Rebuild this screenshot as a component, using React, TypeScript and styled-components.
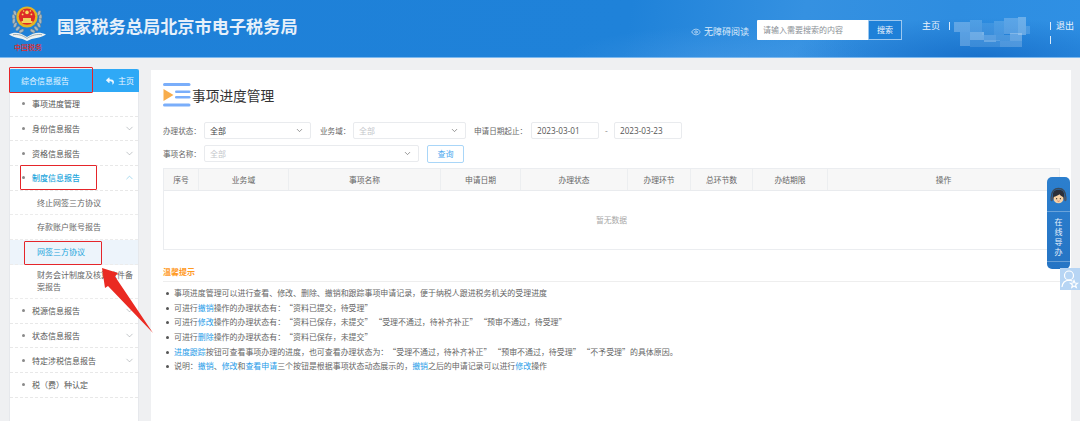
import React from "react";
import styled, { createGlobalStyle } from "styled-components";
import { ChevronDown, ChevronUp, Eye } from "lucide-react";
import { FaReply } from "react-icons/fa";

const Global = createGlobalStyle`
  html, body { margin: 0; padding: 0; background: #eff0f2; }
  body { font-family: "Noto Sans CJK SC", "Noto Sans", sans-serif; text-spacing-trim: space-all; }
  * { box-sizing: border-box; }
`;

const Page = styled.div`
  position: relative;
  width: 1080px;
  height: 421px;
  overflow: hidden;
  background: #eff0f2;
`;

const Header = styled.header`
  height: 58px;
  display: flex;
  align-items: flex-start;
  padding-left: 9px;
  color: #fff;
  border-bottom: 1px solid #7db9ef;
  background:
    radial-gradient(ellipse 190px 40px at 980px 58px, rgba(18, 104, 196, 0.75), transparent 100%),
    radial-gradient(ellipse 160px 36px at 720px 62px, rgba(90, 165, 235, 0.35), transparent 100%),
    linear-gradient(100deg, #1e80d8 0%, #1f82d9 58%, #3591e1 74%, #2e8de0 88%, #2f90e4 100%);
`;

const Logo = styled.svg`
  width: 38px;
  height: 50px;
  margin-top: 4px;
  flex: none;
`;

const SiteTitle = styled.h1`
  margin: 16px 0 0 10px;
  font-size: 17.2px;
  line-height: 20px;
  font-weight: 700;
  color: #e6f0fa;
  white-space: nowrap;
`;

const HeaderRight = styled.div`
  margin-left: auto;
  display: flex;
  align-items: flex-start;
`;

const A11y = styled.div`
  display: flex;
  align-items: center;
  gap: 3px;
  margin-top: 25px;
  font-size: 9px;
  line-height: 13px;
  color: #dcebfa;
  white-space: nowrap;
`;

const SearchBox = styled.div`
  display: flex;
  width: 145px;
  height: 20px;
  margin: 20px 0 0 8px;
  border-radius: 1px;
  background: #fff;
`;

const SearchInput = styled.div`
  flex: 1;
  padding-left: 6px;
  font-size: 8px;
  line-height: 20px;
  color: #8a8f96;
`;

const SearchButton = styled.div`
  width: 34px;
  text-align: center;
  font-size: 8px;
  line-height: 18px;
  color: #f0f6fd;
  background: #1e80d8;
  border: 1px solid #9cc8f0;
  border-radius: 0 1px 1px 0;
`;

const HeaderLink = styled.span`
  font-size: 9px;
  line-height: 14px;
  color: #eaf3fc;
  white-space: nowrap;
`;

const HomeLink = styled(HeaderLink)`
  margin: 19px 0 0 20px;
`;

const Pipe = styled.i`
  display: block;
  width: 1px;
  height: 8px;
  background: #dcebfa;
`;

const HomePipe = styled(Pipe)`
  margin: 22px 0 0 9px;
`;

const Mosaic = styled.svg`
  width: 84px;
  height: 36px;
  margin: 14px 0 0 4px;
  flex: none;
`;

const Logout = styled.div`
  display: grid;
  grid-template-columns: 1px auto;
  column-gap: 5px;
  row-gap: 3px;
  align-items: center;
  margin: 19px 6px 0 12px;
`;

const Content = styled.div`
  display: flex;
  align-items: flex-start;
  gap: 12px;
  padding: 11px 9px 0 9px;
`;

const Sidebar = styled.aside`
  width: 130px;
  height: 360px;
  flex: none;
  background: #fff;
  border-right: 1px solid #e6e8ec;
  border-left: 1px solid #e6e8ec;
`;

const SideHead = styled.div`
  height: 23px;
  margin: 0 -1px;
  display: flex;
  align-items: center;
  justify-content: space-between;
  padding: 0 5px 0 12px;
  background: #2fa9f6;
  color: #eaf6ff;
  font-size: 8px;
  border-radius: 2px 2px 0 0;
`;

const HomeBack = styled.span`
  display: flex;
  align-items: center;
  gap: 4px;
  font-size: 8px;
`;

const MenuRow = styled.div<{ $active?: boolean }>`
  height: 24.7px;
  display: flex;
  align-items: center;
  padding: 0 3px 0 12px;
  font-size: 8px;
  color: ${(p) => (p.$active ? "#1ba5dc" : "#555")};
  font-weight: ${(p) => (p.$active ? 500 : 400)};
  border-bottom: 1px dashed #e8e8e8;
  svg { margin-left: auto; color: ${(p) => (p.$active ? "#49b0dc" : "#7f858c")}; }
`;

const Dot = styled.i`
  width: 3px;
  height: 3px;
  margin-right: 7px;
  border-radius: 50%;
  background: #8a8a8a;
  flex: none;
`;

const SubRow = styled.div<{ $selected?: boolean; $tall?: boolean }>`
  min-height: 24.7px;
  display: flex;
  align-items: center;
  padding: 0 2px 0 27px;
  font-size: 8px;
  line-height: 12px;
  color: ${(p) => (p.$selected ? "#1ba5dc" : "#666")};
  background: ${(p) => (p.$selected ? "#edf4fb" : "#fff")};
  border-bottom: 1px dashed #ececec;
  ${(p) => p.$tall && "height: 34px;"}
`;

const Main = styled.main`
  width: 920px;
  height: 351px;
  margin-top: 1px;
  padding: 13px 11px 0 12px;
  background: #fff;
`;

const TitleRow = styled.div`
  display: flex;
  align-items: center;
  height: 24px;
`;

const TitleIcon = styled.svg`
  width: 29px;
  height: 24px;
  flex: none;
`;

const PageTitle = styled.h2`
  margin: 0;
  font-size: 13.7px;
  font-weight: 400;
  color: #333;
`;

const FormRow = styled.div`
  display: flex;
  align-items: center;
  height: 17px;
  margin-top: 6px;
`;

const FirstFormRow = styled(FormRow)`
  margin-top: 15px;
`;

const Label = styled.label<{ $w: number; $pad?: number }>`
  width: ${(p) => p.$w}px;
  padding-left: ${(p) => p.$pad ?? 0}px;
  flex: none;
  font-size: 7.6px;
  color: #666;
  white-space: nowrap;
`;

const Field = styled.div<{ $w: number; $muted?: boolean }>`
  width: ${(p) => p.$w}px;
  height: 17px;
  flex: none;
  display: flex;
  align-items: center;
  justify-content: space-between;
  padding: 0 6px 0 5px;
  font-size: 8px;
  color: ${(p) => (p.$muted ? "#c4c6ca" : "#444")};
  background: #fff;
  border: 1px solid #e9ebee;
  border-radius: 2px;
  svg { color: #777; }
`;

const DateField = styled(Field)`
  font-family: "Open Sans", "Noto Sans", sans-serif;
  font-size: 8.2px;
  color: #555;
`;

const Dash = styled.span`
  width: 15px;
  text-align: center;
  font-size: 8px;
  color: #777;
`;

const QueryButton = styled.button`
  width: 37px;
  height: 18px;
  margin-left: 8px;
  padding: 0;
  font: inherit;
  font-size: 8px;
  color: #4aa8ee;
  background: #fff;
  border: 1px solid #a9d6f8;
  border-radius: 2px;
`;

const Table = styled.div`
  margin-top: 6px;
  width: 897px;
  border: 1px solid #ebedf0;
`;

const TableHead = styled.div`
  display: grid;
  grid-template-columns: 35px 90px 152px 80px 107px 63px 62px 75px 1fr;
  height: 22px;
  background: #f7f7f7;
  border-bottom: 1px solid #e9ebee;
`;

const Th = styled.div`
  display: flex;
  align-items: center;
  justify-content: center;
  font-size: 7.8px;
  color: #666;
  border-right: 1px solid #eceef0;
  &:last-child { border-right: 0; }
`;

const Empty = styled.div`
  height: 58px;
  padding-bottom: 2px;
  display: flex;
  align-items: center;
  justify-content: center;
  font-size: 7.8px;
  color: #a8a8a8;
`;

const TipsTitle = styled.div`
  margin-top: 15px;
  height: 17px;
  font-size: 8px;
  line-height: 14px;
  font-weight: 700;
  color: #ff9a1f;
  border-bottom: 1px solid #eeeeee;
  width: 897px;
`;

const TipList = styled.ul`
  margin: 4px 0 0;
  padding: 0;
  list-style: none;
`;

const Tip = styled.li`
  position: relative;
  padding-left: 11px;
  height: 14.7px;
  font-size: 7.94px;
  line-height: 14.7px;
  color: #666;
  white-space: nowrap;
  &::before {
    content: "";
    position: absolute;
    left: 3px;
    top: 6px;
    width: 3px;
    height: 3px;
    border-radius: 50%;
    background: #555;
  }
`;

const Hl = styled.span`
  color: #1e9be8;
`;

const RedBox = styled.div<{ $x: number; $y: number; $w: number; $h: number }>`
  position: absolute;
  left: ${(p) => p.$x}px;
  top: ${(p) => p.$y}px;
  width: ${(p) => p.$w}px;
  height: ${(p) => p.$h}px;
  border: 1.5px solid #e5252a;
  border-radius: 1px;
`;

const Arrow = styled.svg`
  position: absolute;
  left: 95px;
  top: 262px;
  width: 65px;
  height: 76px;
`;

const Helper = styled.div`
  position: absolute;
  left: 1047px;
  top: 177px;
  width: 23px;
  height: 92px;
  display: flex;
  flex-direction: column;
  align-items: center;
  background: linear-gradient(180deg, #2c7fce, #2574c4);
  border-radius: 5px;
`;

const HelperAvatar = styled.svg`
  width: 19px;
  height: 19px;
  margin: 10px 0 5px;
  flex: none;
`;

const HelperRule = styled.i`
  display: block;
  width: 100%;
  height: 1px;
  flex: none;
  background: rgba(255, 255, 255, 0.3);
`;

const HelperText = styled.div`
  width: 100%;
  height: 49px;
  flex: none;
  display: flex;
  flex-direction: column;
  align-items: center;
  justify-content: center;
  font-size: 8px;
  line-height: 10px;
  color: #e8f2fc;
`;

const UserBadge = styled.div`
  position: absolute;
  left: 1060px;
  top: 268px;
  width: 20px;
  height: 22px;
  display: flex;
  align-items: center;
  justify-content: center;
  background: #b7d5f4;
`;

const subs = ["终止网签三方协议", "存款账户账号报告"];
const heads = ["序号", "业务域", "事项名称", "申请日期", "办理状态", "办理环节", "总环节数", "办结期限", "操作"];
const mosaic: [number, number, number, number, number][] = [
  [0, 8, 16, 10, 0.32], [16, 6, 12, 12, 0.22], [28, 9, 12, 12, 0.12], [40, 7, 10, 14, 0.2],
  [50, 4, 14, 16, 0.28], [64, 3, 8, 18, 0.38], [72, 12, 4, 8, 0.2], [6, 18, 10, 14, 0.3],
  [16, 18, 14, 8, 0.42], [30, 21, 12, 7, 0.3], [42, 21, 14, 6, 0.22], [56, 19, 12, 8, 0.36],
  [16, 26, 30, 7, 0.16], [46, 27, 22, 6, 0.26],
];
const leaves = [
  [7.5, 9, -20], [6.2, 13, -8], [6.4, 17, 8], [7.8, 21, 24], [10.4, 24.6, 42], [14, 27, 62],
];

export default function App() {
  return (
    <Page lang="zh-CN">
      <Global />
      <Header>
        <Logo viewBox="0 0 38 50">
          {leaves.map(([x, y, r], i) => (
            <g key={i}>
              <ellipse cx={x - 1.6} cy={y} rx="1.5" ry="2.7" fill="#aab7bd" stroke="#5f7078" strokeWidth=".35" transform={`rotate(${r} ${x - 1.6} ${y})`} />
              <ellipse cx={37.6 - x} cy={y} rx="1.5" ry="2.7" fill="#aab7bd" stroke="#5f7078" strokeWidth=".35" transform={`rotate(${-r} ${37.6 - x} ${y})`} />
            </g>
          ))}
          <path d="M0 30.5 C5 27.5 11 28 18 33 C25 28 31 27.5 37 30.5 C31 34.5 24 33.5 18 37 C12 33.5 6 34.5 0 30.5 Z" fill="#eef2f1" />
          <path d="M4 30.7 C9 30 13 31 18 34.4 C23 31 28 30 33 30.7" fill="none" stroke="#7d8f96" strokeWidth=".7" />
          <circle cx="18" cy="13" r="10.6" fill="#e6b422" />
          <circle cx="18" cy="12.6" r="8.2" fill="#de2a27" />
          <path d="M12.5 17h11v2h-11z" fill="#f2d35a" />
          <path d="M14 14h8v3h-8z" fill="#f2d35a" />
          <circle cx="18" cy="8.4" r="1.8" fill="#f6dc63" />
          <circle cx="13.6" cy="10.4" r=".9" fill="#f6dc63" />
          <circle cx="22.4" cy="10.4" r=".9" fill="#f6dc63" />
          <circle cx="14.6" cy="7" r=".8" fill="#f6dc63" />
          <circle cx="21.4" cy="7" r=".8" fill="#f6dc63" />
          <text x="19" y="46" textAnchor="middle" fontSize="7" fontWeight="500" fill="#e02a2a" fontFamily="'Noto Sans CJK SC', sans-serif">中国税务</text>
        </Logo>
        <SiteTitle>国家税务总局北京市电子税务局</SiteTitle>
        <HeaderRight>
          <A11y>
            <Eye size={10} strokeWidth={1.6} />
            无障碍阅读
          </A11y>
          <SearchBox>
            <SearchInput>请输入需要搜索的内容</SearchInput>
            <SearchButton>搜索</SearchButton>
          </SearchBox>
          <HomeLink>主页</HomeLink>
          <HomePipe />
          <Mosaic viewBox="0 0 84 36">
            {mosaic.map(([x, y, w, h, o], i) => (
              <rect key={i} x={x} y={y} width={w} height={h} fill="#cfe4f8" opacity={o} />
            ))}
          </Mosaic>
          <Logout>
            <Pipe />
            <HeaderLink>退出</HeaderLink>
            <Pipe />
          </Logout>
        </HeaderRight>
      </Header>

      <Content>
        <Sidebar>
          <SideHead>
            综合信息报告
            <HomeBack>
              <FaReply size={8} />
              主页
            </HomeBack>
          </SideHead>
          <MenuRow><Dot />事项进度管理</MenuRow>
          <MenuRow><Dot />身份信息报告<ChevronDown size={11} strokeWidth={1} /></MenuRow>
          <MenuRow><Dot />资格信息报告<ChevronDown size={11} strokeWidth={1} /></MenuRow>
          <MenuRow $active><Dot />制度信息报告<ChevronUp size={11} strokeWidth={1} /></MenuRow>
          {subs.map((s) => (
            <SubRow key={s}>{s}</SubRow>
          ))}
          <SubRow $selected>网签三方协议</SubRow>
          <SubRow $tall>财务会计制度及核算软件备案报告</SubRow>
          <MenuRow><Dot />税源信息报告<ChevronDown size={11} strokeWidth={1} /></MenuRow>
          <MenuRow><Dot />状态信息报告<ChevronDown size={11} strokeWidth={1} /></MenuRow>
          <MenuRow><Dot />特定涉税信息报告<ChevronDown size={11} strokeWidth={1} /></MenuRow>
          <MenuRow><Dot />税（费）种认定</MenuRow>
        </Sidebar>

        <Main>
          <TitleRow>
            <TitleIcon viewBox="0 0 29 24">
              <rect x="0" y="0" width="27.5" height="3" rx="1.5" fill="#7aaefa" />
              <rect x="12" y="7.5" width="15.5" height="2.6" rx="1.3" fill="#7aaefa" />
              <rect x="12" y="13" width="15.5" height="2.6" rx="1.3" fill="#7aaefa" />
              <rect x="0" y="20.5" width="27.5" height="3" rx="1.5" fill="#7aaefa" />
              <path d="M0.5 6 L10.5 12 L0.5 18 Z" fill="#f8ad4c" />
            </TitleIcon>
            <PageTitle>事项进度管理</PageTitle>
          </TitleRow>

          <FirstFormRow>
            <Label $w={41}>办理状态：</Label>
            <Field $w={107}>全部<ChevronDown size={9} /></Field>
            <Label $w={42} $pad={9}>业务域：</Label>
            <Field $w={113} $muted>全部<ChevronDown size={9} /></Field>
            <Label $w={65} $pad={8}>申请日期起止：</Label>
            <DateField $w={68}>2023-03-01</DateField>
            <Dash>-</Dash>
            <DateField $w={68}>2023-03-23</DateField>
          </FirstFormRow>
          <FormRow>
            <Label $w={41}>事项名称：</Label>
            <Field $w={215} $muted>全部<ChevronDown size={9} /></Field>
            <QueryButton>查询</QueryButton>
          </FormRow>

          <Table>
            <TableHead>
              {heads.map((h) => (
                <Th key={h}>{h}</Th>
              ))}
            </TableHead>
            <Empty>暂无数据</Empty>
          </Table>

          <TipsTitle>温馨提示</TipsTitle>
          <TipList>
            <Tip>事项进度管理可以进行查看、修改、删除、撤销和跟踪事项申请记录，便于纳税人跟进税务机关的受理进度</Tip>
            <Tip>可进行<Hl>撤销</Hl>操作的办理状态有：“资料已提交，待受理”</Tip>
            <Tip>可进行<Hl>修改</Hl>操作的办理状态有：“资料已保存，未提交” “受理不通过，待补齐补正” “预审不通过，待受理”</Tip>
            <Tip>可进行<Hl>删除</Hl>操作的办理状态有：“资料已保存，未提交”</Tip>
            <Tip><Hl>进度跟踪</Hl>按钮可查看事项办理的进度，也可查看办理状态为：“受理不通过，待补齐补正” “预审不通过，待受理” “不予受理”的具体原因。</Tip>
            <Tip>说明：<Hl>撤销</Hl>、<Hl>修改</Hl>和<Hl>查看申请</Hl>三个按钮是根据事项状态动态展示的，<Hl>撤销</Hl>之后的申请记录可以进行<Hl>修改</Hl>操作</Tip>
          </TipList>
        </Main>
      </Content>

      <RedBox $x={9} $y={67} $w={84} $h={26} />
      <RedBox $x={20} $y={165} $w={77} $h={25} />
      <RedBox $x={24} $y={241} $w={78} $h={24} />
      <Arrow viewBox="0 0 65 76">
        <path d="M7 6 L23 11 L20 14.5 L58 71 L13 24 L10 26 Z" fill="#ea2a22" />
      </Arrow>

      <Helper>
        <HelperAvatar viewBox="0 0 20 20">
          <path d="M2.5 11 C2.5 4 6 1.5 10 1.5 S17.5 4 17.5 11" fill="none" stroke="#3a4a5c" strokeWidth="1.6" />
          <path d="M4 9 C4 4 7 3 10 3 S16 4 16 9 L16 13 H4 Z" fill="#2b2f3a" />
          <circle cx="10" cy="12" r="5.2" fill="#f6d1a6" />
          <path d="M4.8 10.5 C7 10 10 8.5 11 7.5 C12 9 14 10 15.2 10.5 L15 7 L10 5 L5 7 Z" fill="#2b2f3a" />
          <rect x="1.5" y="10" width="2.6" height="5" rx="1.2" fill="#48566a" />
          <rect x="15.9" y="10" width="2.6" height="5" rx="1.2" fill="#48566a" />
          <circle cx="8" cy="12.3" r=".7" fill="#333" />
          <circle cx="12" cy="12.3" r=".7" fill="#333" />
          <path d="M8.8 14.6 Q10 15.6 11.2 14.6" stroke="#c8553d" strokeWidth=".7" fill="none" />
        </HelperAvatar>
        <HelperRule />
        <HelperText>
          <span>在</span>
          <span>线</span>
          <span>导</span>
          <span>办</span>
        </HelperText>
        <HelperRule />
      </Helper>
      <UserBadge>
        <svg width="18" height="20" viewBox="0 0 18 20" fill="none" stroke="#fff" strokeWidth="1.2">
          <circle cx="8" cy="6.5" r="4.5" />
          <path d="M1 18 C1.5 13.5 4 11.5 8 11.2 C9.5 11.2 10.5 11.6 11.5 12.2" />
          <path d="M13 11.5 L14 14 L16.6 14.2 L14.6 15.9 L15.3 18.4 L13 17 L10.8 18.4 L11.4 15.9 L9.4 14.2 L12 14 Z" />
        </svg>
      </UserBadge>
    </Page>
  );
}
